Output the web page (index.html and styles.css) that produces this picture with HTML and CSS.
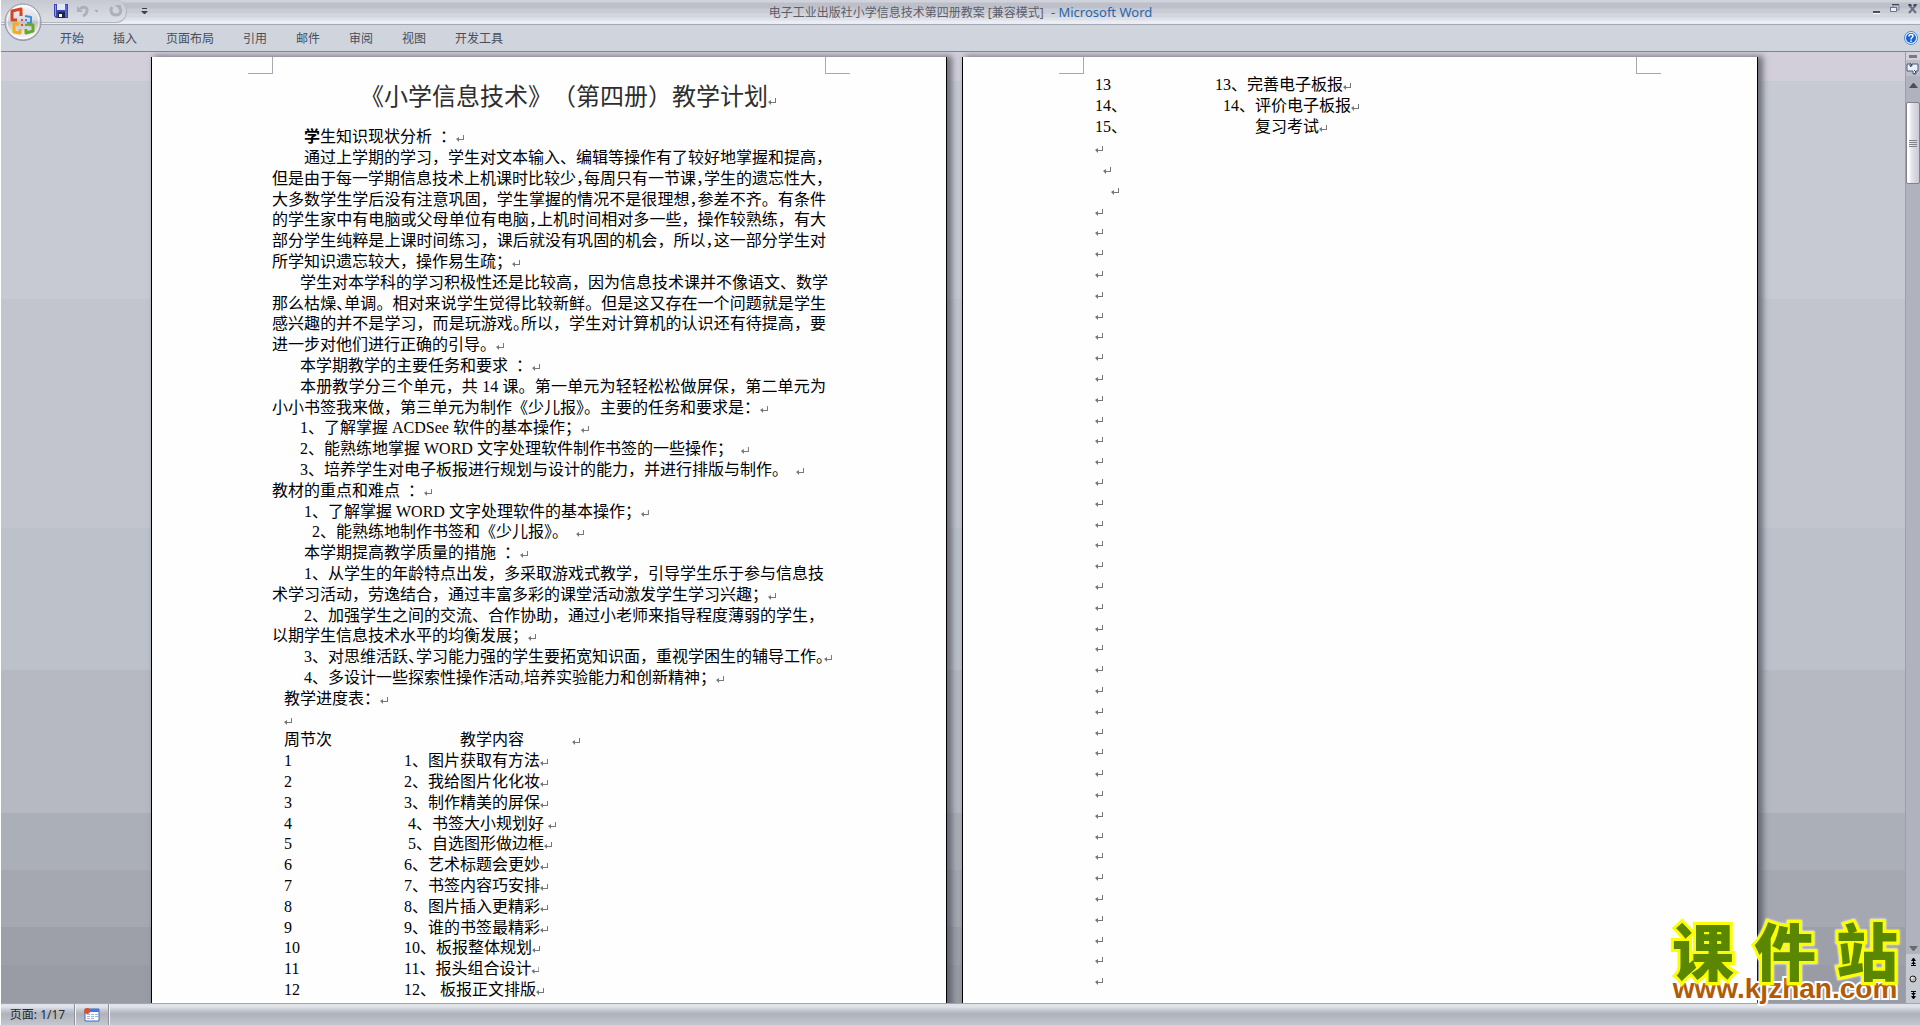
FILE: index.html
```html
<!DOCTYPE html>
<html lang="zh-CN">
<head>
<meta charset="utf-8">
<title>电子工业出版社小学信息技术第四册教案 [兼容模式] - Microsoft Word</title>
<link rel="stylesheet" href="styles.css">
</head>
<body>
<div class="app">
  <header class="titlebar">
    <div class="tools">
      <div class="quick">
        <button class="tool" aria-label="保存"><svg width="14" height="14" viewBox="0 0 14 14"><path d="M0 0h14v14H2l-2-2z" fill="#3a45b0"/><path d="M1 1h1v11H1z" fill="#8f9be8"/><path d="M3 0h8v6H3z" fill="#dfe8fb"/><path d="M11 1h2v12h-2z" fill="#5866d0"/><path d="M4 8h7v6H4z" fill="#1d2250"/><path d="M5 10h3v3H5z" fill="#fff"/></svg></button>
        <button class="tool" aria-label="撤消"><svg width="14" height="14" viewBox="0 0 14 14"><path d="M1 2v6h6z" fill="#acafbc"/><path d="M4 5c3-3 8-2 7 2 0 2-2 4-4 5" fill="none" stroke="#acafbc" stroke-width="3"/></svg></button>
        <span class="caret"></span>
        <button class="tool redo" aria-label="重复"><svg width="14" height="14" viewBox="0 0 14 14"><path d="M3 3c-2 3-1 8 4 8s6-5 3-8" fill="none" stroke="#acafbc" stroke-width="3"/><path d="M6 1h6v6z" fill="#acafbc"/></svg></button>
      </div>
      <button class="more" aria-label="自定义快速访问工具栏"><svg width="7" height="7" viewBox="0 0 7 7"><path d="M1 0h5v1H1zM0 3h7L4 6H3z" fill="#3c3f48"/></svg></button>
    </div>
    <h1 class="caption">电子工业出版社小学信息技术第四册教案 [兼容模式] <span class="product">- Microsoft Word</span></h1>
    <div class="window-buttons">
      <button aria-label="最小化"><svg width="10" height="10" viewBox="0 0 10 10"><path d="M1 7h7v2H1z" fill="#4b4f5a"/><path d="M1 9h7v1H1z" fill="#fff"/></svg></button>
      <button aria-label="还原"><svg width="10" height="10" viewBox="0 0 10 10"><path d="M3 3V1h6v5H7" fill="none" stroke="#7d8699"/><path d="M2 0h7v1H2zM0 3h7v1H0z" fill="#3f434d"/><path d="M.5 3.500h6v4h-6z" fill="#eef0f5" stroke="#6b748a"/></svg></button>
      <button aria-label="关闭"><svg width="10" height="10" viewBox="0 0 10 10"><path d="M1 1l7 8M8 1L1 9" stroke="#66718a" stroke-width="2"/><path d="M0 0h3l1 2H1zM6 0h3L8 2H5z" fill="#444852"/></svg></button>
    </div>
  </header>
  <button class="office" aria-label="Office 按钮">
    <svg width="40" height="42" viewBox="0 0 40 42">
      <defs><linearGradient id="orb" x1="0" y1="0" x2="0" y2="1"><stop offset="0" stop-color="#f7f7fa"/><stop offset=".45" stop-color="#d9dae0"/><stop offset=".5" stop-color="#bfc1c9"/><stop offset="1" stop-color="#fff"/></linearGradient></defs>
      <circle cx="20" cy="21" r="18" fill="#7c8090" opacity=".6"/>
      <circle cx="20" cy="20" r="18" fill="url(#orb)" stroke="#8f93a0"/>
      <circle cx="20" cy="20" r="16" fill="none" stroke="#fff" opacity=".8"/>
      <g fill="none" stroke-width="3" stroke-linejoin="round">
        <path d="M14 18H9v-9l9-2v7" stroke="#d8451b"/>
        <path d="M22 14l6 1v6h-4" stroke="#3d8ed6" stroke-width="2"/>
        <path d="M16 22h-5v8l6 1v-4" stroke="#f5ac19"/>
        <path d="M24 22l6 1v6l-7 2v-4" stroke="#6aa82c"/>
      </g>
      <path d="M18 17h2v2h-2zM18 22h2v2h-2z" fill="#e0541d"/><path d="M22 17h2v2h-2z" fill="#3d8ed6"/><path d="M22 22h2v2h-2z" fill="#6aa82c"/>
    </svg>
  </button>
  <nav class="ribbon">
    <button>开始</button><button>插入</button><button>页面布局</button><button>引用</button><button>邮件</button><button>审阅</button><button>视图</button><button>开发工具</button>
    <button class="help" aria-label="帮助"><svg width="14" height="14" viewBox="0 0 14 14"><circle cx="7" cy="7" r="6.500" fill="#eaf2fc" stroke="#4c8ac8"/><circle cx="7" cy="7" r="5" fill="#1e5fd0"/><path d="M5 5.500c0-3 4-2.500 4-.5C9 6.500 7 6.500 7 8.500M7 9.500v1.500" fill="none" stroke="#fff" stroke-width="1.500"/></svg></button>
  </nav>
  <div class="work">
    <main class="desk">
      <article class="page">
        <div class="crops"><span class="crop left"></span><span class="crop right"></span></div>
        <h2 class="doc-title mark">《小学信息技术》（第四册）教学计划</h2>
        <div class="lines">
          <p class="in2 strong mark">学生知识现状分析  ：</p>
          <p class="in2">通过上学期的学习，学生对文本输入、编辑等操作有了较好地掌握和提高，</p>
          <p class="full">但是由于每一学期信息技术上机课时比较少<i>，</i>每周只有一节课<i>，</i>学生的遗忘性大，</p>
          <p class="full">大多数学生学后没有注意巩固，学生掌握的情况不是很理想<i>，</i>参差不齐。有条件</p>
          <p class="full">的学生家中有电脑或父母单位有电脑<i>，</i>上机时间相对多一些，操作较熟练，有大</p>
          <p class="full">部分学生纯粹是上课时间练习，课后就没有巩固的机会，所以<i>，</i>这一部分学生对</p>
          <p class="mark">所学知识遗忘较大，操作易生疏；</p>
          <p class="in1">学生对本学科的学习积极性还是比较高，因为信息技术课并不像语文、数学</p>
          <p class="full">那么枯燥<i>、</i>单调。相对来说学生觉得比较新鲜。但是这又存在一个问题就是学生</p>
          <p class="full">感兴趣的并不是学习，而是玩游戏<i>。</i>所以，学生对计算机的认识还有待提高，要</p>
          <p class="mark">进一步对他们进行正确的引导。</p>
          <p class="in1 mark">本学期教学的主要任务和要求  ：</p>
          <p class="in1 full">本册教学分三个单元，共 14 课。第一单元为轻轻松松做屏保，第二单元为</p>
          <p class="mark">小小书签我来做，第三单元为制作《少儿报<i>》</i>。主要的任务和要求是：</p>
          <p class="in1 mark">1、了解掌握 ACDSee 软件的基本操作；</p>
          <p class="in1 mark">2、能熟练地掌握 WORD 文字处理软件制作书签的一些操作；  </p>
          <p class="in1 mark">3、培养学生对电子板报进行规划与设计的能力，并进行排版与制作。  </p>
          <p class="mark">教材的重点和难点  ：</p>
          <p class="in2 mark">1、了解掌握 WORD 文字处理软件的基本操作；</p>
          <p class="in2 mark">  2、能熟练地制作书签和《少儿报<i>》</i>。  </p>
          <p class="in2 mark">本学期提高教学质量的措施  ：</p>
          <p class="in2">1、从学生的年龄特点出发，多采取游戏式教学，引导学生乐于参与信息技</p>
          <p class="mark">术学习活动，劳逸结合，通过丰富多彩的课堂活动激发学生学习兴趣；</p>
          <p class="in2">2、加强学生之间的交流、合作协助，通过小老师来指导程度薄弱的学生，</p>
          <p class="mark">以期学生信息技术水平的均衡发展；</p>
          <p class="in2 mark">3、对思维活跃<i>、</i>学习能力强的学生要拓宽知识面，重视学困生的辅导工作<i>。</i></p>
          <p class="in2 mark">4、多设计一些探索性操作活动<span class="typo">,</span>培养实验能力和创新精神；</p>
          <p class="in0 mark">教学进度表：</p>
          <p class="in0 mark"></p>
        </div>
        <table class="plan">
          <thead><tr><th>周节次</th><th class="topic mark">教学内容</th></tr></thead>
          <tbody>
            <tr><td>1</td><td class="mark">1、图片获取有方法</td></tr>
            <tr><td>2</td><td class="mark">2、我给图片化化妆</td></tr>
            <tr><td>3</td><td class="mark">3、制作精美的屏保</td></tr>
            <tr><td>4</td><td class="mark"> 4、书签大小规划好 </td></tr>
            <tr><td>5</td><td class="mark"> 5、自选图形做边框</td></tr>
            <tr><td>6</td><td class="mark">6、艺术标题会更妙</td></tr>
            <tr><td>7</td><td class="mark">7、书签内容巧安排</td></tr>
            <tr><td>8</td><td class="mark">8、图片插入更精彩</td></tr>
            <tr><td>9</td><td class="mark">9、谁的书签最精彩</td></tr>
            <tr><td>10</td><td class="mark">10、板报整体规划</td></tr>
            <tr><td>11</td><td class="mark">11、报头组合设计</td></tr>
            <tr><td>12</td><td class="mark">12、 板报正文排版</td></tr>
          </tbody>
        </table>
      </article>
      <article class="page continued">
        <div class="crops"><span class="crop left"></span><span class="crop right"></span></div>
        <table class="plan">
          <tbody>
            <tr><td>13</td><td class="mark">13、完善电子板报</td></tr>
            <tr><td>14、</td><td class="mark">  14、评价电子板报</td></tr>
            <tr><td>15、</td><td class="mark">          复习考试</td></tr>
          </tbody>
        </table>
        <div class="lines blank">
          <p class="mark"></p><p class="mark">  </p><p class="mark">    </p><p class="mark"></p><p class="mark"></p>
          <p class="mark"></p><p class="mark"></p><p class="mark"></p><p class="mark"></p><p class="mark"></p>
          <p class="mark"></p><p class="mark"></p><p class="mark"></p><p class="mark"></p><p class="mark"></p>
          <p class="mark"></p><p class="mark"></p><p class="mark"></p><p class="mark"></p><p class="mark"></p>
          <p class="mark"></p><p class="mark"></p><p class="mark"></p><p class="mark"></p><p class="mark"></p>
          <p class="mark"></p><p class="mark"></p><p class="mark"></p><p class="mark"></p><p class="mark"></p>
          <p class="mark"></p><p class="mark"></p><p class="mark"></p><p class="mark"></p><p class="mark"></p>
          <p class="mark"></p><p class="mark"></p><p class="mark"></p><p class="mark"></p><p class="mark"></p>
          <p class="mark"></p>
        </div>
      </article>
    </main>
    <aside class="scroll">
      <button class="split" aria-label="拆分"></button>
      <button class="ruler" aria-label="标尺"><svg width="13" height="13" viewBox="0 0 13 13"><path d="M1 2h3v2h2V2h6v7h-2v3H7V9H1z" fill="#f3eef4" stroke="#4b5878"/><path d="M4 1l2 2-2 2M8 8l2 2-2 2" fill="none" stroke="#2c5570"/></svg></button>
      <button class="arrow" aria-label="向上滚动"><svg width="9" height="5" viewBox="0 0 9 5"><path d="M4 0h1l4 5H0z" fill="#4d5058"/></svg></button>
      <div class="track"><button class="thumb" aria-label="滚动条"><span></span><span></span><span></span><span></span></button></div>
      <button class="arrow down" aria-label="向下滚动"><svg width="9" height="5" viewBox="0 0 9 5"><path d="M0 0h9L5 5H4z" fill="#666a73"/></svg></button>
      <div class="browse">
        <button aria-label="前一页"><svg width="7" height="8" viewBox="0 0 7 8"><path d="M3 0h1l2 3H4v1l2 2H4v1h2v1H1V7h2V6H1l2-2V3H1z" fill="#000"/></svg></button>
        <button aria-label="选择浏览对象"><svg width="8" height="8" viewBox="0 0 8 8"><circle cx="4" cy="4" r="3" fill="#bdbdb5" stroke="#222"/><circle cx="3" cy="3" r="1" fill="#fff"/></svg></button>
        <button aria-label="下一页"><svg width="7" height="8" viewBox="0 0 7 8"><path d="M3 8h1l2-3H4V4l2-2H4V1h2V0H1v1h2v1H1l2 2v1H1z" fill="#000"/></svg></button>
      </div>
    </aside>
  </div>
  <footer class="status">
    <button class="pageno">页面: 1/17</button>
    <button class="macro" aria-label="录制宏"><svg width="16" height="14" viewBox="0 0 16 14"><path d="M2 1h13v12H1V4z" fill="#fff" stroke="#3b6fc4"/><path d="M5 1h10v3H5z" fill="#3f78e0"/><path d="M3 6h3v1H3zM7 6h3v1H7zM11 6h3v1h-3zM3 8h3v1H3zM7 8h3v1H7zM11 8h3v1h-3zM3 10h3v1H3zM7 10h3v1H7z" fill="#9db4dc"/><circle cx="3" cy="3" r="3" fill="#d9522c"/></svg></button>
  </footer>
  <a class="watermark" href="http://www.kjzhan.com">
    <span class="brand"><b>课</b><b>件</b><b>站</b></span>
    <span class="site">www.kjzhan.com</span>
  </a>
</div>
</body>
</html>
```
FILE: styles.css
```css
* { box-sizing: border-box; }
body {
  margin: 0;
  padding-left: 1px;
  background: #fff;
  font-family: "Noto Sans", "Noto Sans CJK SC", sans-serif;
  font-size: 12px;
}
button {
  margin: 0;
  padding: 0;
  border: 0;
  background: none;
  font: inherit;
  color: inherit;
}
svg { display: block; }
.app {
  position: relative;
  display: grid;
  grid-template-rows: 24px 28px minmax(0, 1fr) 22px;
  height: 100vh;
  overflow: hidden;
}

/* title bar */
.titlebar {
  display: grid;
  grid-template-columns: 1fr auto 1fr;
  align-items: start;
  background: linear-gradient(#d0d3dc 0 2px, #bdc0c9 3px 8px, #c9ccd5 9px 13px, #d3d6de 14px 17px, #dfe1e6 18px 20px, #e9edf5 21px);
}
.tools { display: flex; align-items: center; gap: 14px; }
.quick {
  display: flex;
  align-items: center;
  width: 126px;
  height: 23px;
  padding-left: 53px;
  border-bottom: 1px solid #b3b6c0;
  border-right: 1px solid #b3b6c0;
  border-radius: 0 11px 11px 0;
  background: linear-gradient(#c6c9d1, #dcdfe6);
}
.tool { width: 14px; margin-right: 8px; }
.tool.redo { margin: 0 0 0 10px; }
.caret {
  width: 5px;
  height: 3px;
  margin-left: -4px;
  background: #a4a8b6;
  clip-path: polygon(0 0, 100% 0, 50% 100%);
}
.caption {
  margin: 0;
  font-size: 12px;
  line-height: 24px;
  font-weight: 400;
  color: #5b5e69;
}
.product { color: #2a66a8; font-size: 13px; margin-left: 4px; }
.window-buttons {
  display: flex;
  justify-content: flex-end;
  gap: 8px;
  padding: 4px 2px;
}

/* office orb spans the title bar and the ribbon */
.office { position: absolute; left: 2px; top: 2px; z-index: 2; }

/* ribbon tabs */
.ribbon {
  display: flex;
  align-items: center;
  gap: 1px;
  padding: 0 2px 0 45px;
  border-top: 1px solid #a5a8b3;
  border-bottom: 1px solid #7f8590;
  background: #d0d4dd;
  color: #494d5a;
}
.ribbon button { padding: 2px 14px 0; line-height: 20px; }
.ribbon .help { margin-left: auto; padding: 0; }

/* document area */
.work { display: flex; min-height: 0; }
.desk {
  flex: 1;
  display: flex;
  justify-content: center;
  gap: 15px;
  min-width: 0;
  padding: 5px 0 0 3px;
  overflow: hidden;
  background: linear-gradient(#d2ceda 0 3%, #c7cad3 0 26%, #c2c5ce 0 50%, #bcc1ca 0 65%, #b6b9c2 0 80%, #abafb7 0 86%, #a5a8b0 0 92%, #9da0a8 0 96%, #999ca4 0);
}
.page {
  flex: none;
  display: flow-root;
  width: 796px;
  min-height: 1123px;
  border: solid #000;
  border-width: 0 1px;
  background: #fefefe;
  box-shadow: 4px 0 6px 1px rgba(70, 74, 84, .7);
  font-family: "Liberation Serif", "Noto Sans CJK SC", serif;
  font-size: 16px;
  line-height: 21px;
  text-spacing-trim: space-all;
  color: #000;
}
.page p, .page td, .page h2 { white-space: pre; }
.crops { display: flex; justify-content: space-between; padding: 0 96px; margin-bottom: 2px; }
.continued .crops { margin-bottom: 0; }
.crop { width: 25px; height: 17px; border: 0 solid #a8a9b5; border-bottom-width: 1px; }
.crop.left { border-right-width: 1px; }
.crop.right { border-left-width: 1px; }
.doc-title {
  margin: 0 0 8px 208px;
  font-size: 24px;
  line-height: 42px;
  font-weight: 400;
  color: #2e2e2e;
}
.lines { padding: 0 120px; }
.lines p { margin: 0; height: 21px; line-height: 21px; }
.lines p:nth-child(5n) { height: 20px; line-height: 20px; }
.lines .in0 { padding-left: 12px; }
.lines .in1 { padding-left: 28px; }
.lines .in2 { padding-left: 32px; }
.full { text-align-last: justify; }
.strong::first-letter { font-weight: 700; }
.lines i { font-style: normal; font-feature-settings: "halt"; }
.typo { color: #a33; }

/* paragraph marks */
.mark::after {
  content: "";
  display: inline-block;
  width: 8px;
  height: 7px;
  background: #777;
  clip-path: polygon(7px 0, 8px 0, 8px 5px, 3px 5px, 3px 7px, 0 4px, 3px 2px, 3px 4px, 7px 4px);
}

.plan { margin-left: 132px; border-collapse: collapse; }
.plan th, .plan td { padding: 0; height: 21px; line-height: 21px; font-weight: 400; text-align: left; }
.plan th:first-child, .plan td:first-child { width: 120px; }
.plan th, .plan tbody tr:nth-child(5n) td { height: 20px; line-height: 20px; }
.plan .topic { padding-left: 56px; }
.plan .topic::after { margin-left: 48px; }
.lines.blank { padding-left: 132px; }

/* vertical scroll bar */
.scroll {
  display: flex;
  flex-direction: column;
  width: 15px;
  border-left: 1px solid #9da0aa;
  background: #b0b3bd;
}
.split { height: 8px; background: #d2d0da; display: flex; }
.split::before { content: ""; margin: 3px 3px 0; width: 8px; height: 3px; background: #777a83; }
.ruler { height: 16px; background: #bcbfc9; }
.arrow { height: 26px; padding: 5px 0 0 3px; }
.arrow svg { margin-bottom: 12px; }
.track { flex: 1; }
.thumb {
  display: flex;
  flex-direction: column;
  align-items: center;
  justify-content: center;
  gap: 1px;
  width: 14px;
  height: 82px;
  border: 1px solid #7f828c;
  border-radius: 2px;
  background: linear-gradient(90deg, #fff 0 2px, #e6e6ee 4px, #dcd9e4 7px, #c7cad3);
}
.thumb span { width: 8px; height: 1px; background: #7e818a; }
.arrow.down { height: 14px; padding: 2px 0 0 3px; }
.arrow.down svg { margin: 0; }
.browse {
  display: flex;
  flex-direction: column;
  align-items: center;
  justify-content: space-between;
  height: 49px;
  padding: 4px 0;
  background: #c6c9d2;
}

/* status bar */
.status {
  display: flex;
  border-top: 1px solid #a3a5b0;
  background: linear-gradient(#dfe2e8 0 3px, #ccd0d8 5px, #b9bdc6 8px, #aeb2bb 10px, #c4c7d0);
  color: #26282e;
}
.status button { border-right: 1px solid #8f929c; box-shadow: 1px 0 0 #f2f3f6; }
.pageno { width: 74px; line-height: 20px; font-size: 12px; }
.macro { display: grid; place-items: center; width: 34px; }

/* site watermark over the window corner */
.watermark {
  position: absolute;
  right: 22px;
  bottom: 22px;
  width: 226px;
  z-index: 3;
  text-decoration: none;
  font-weight: 900;
}
.brand {
  display: flex;
  justify-content: space-between;
  font-family: "Noto Sans CJK SC", sans-serif;
  font-size: 62px;
  line-height: 48px;
  margin-bottom: 2px;
  color: #5a8600;
  -webkit-text-stroke: 6px #fbff00;
  paint-order: stroke fill;
  filter: drop-shadow(0 0 1px #fff);
}
.brand b { font-weight: 900; }
.site {
  display: block;
  font-family: "Liberation Sans", sans-serif;
  font-size: 28px;
  line-height: 28px;
  text-align: center;
  color: #b35a05;
  -webkit-text-stroke: 4px #fff;
  paint-order: stroke fill;
}
```
